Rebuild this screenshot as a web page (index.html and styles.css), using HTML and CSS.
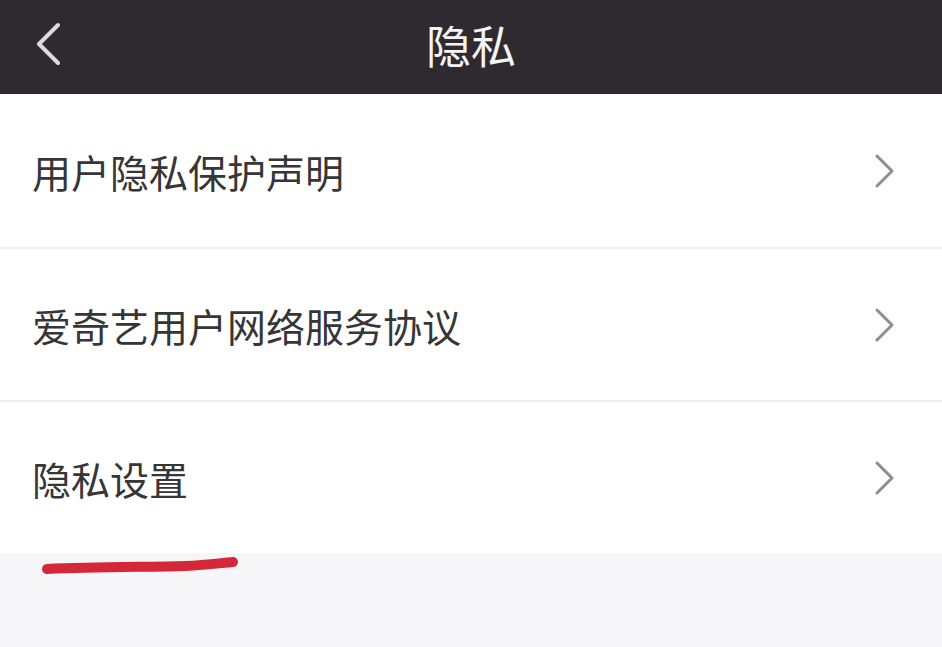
FILE: index.html
```html
<!DOCTYPE html>
<html lang="zh-CN">
<head>
<meta charset="utf-8">
<title>隐私</title>
<link rel="stylesheet" href="styles.css">
</head>
<body>
<div class="page">
  <header class="topbar">
    <div class="back">
      <svg width="24" height="44" viewBox="0 0 24 44"><path d="M21 3 L2 22 L21 41" fill="none" stroke="#dcdcdc" stroke-width="4" stroke-linecap="round" stroke-linejoin="round"/></svg>
    </div>
    <h1 class="title">隐私</h1>
    <div class="spacer"></div>
  </header>
  <ul class="list">
    <li class="row"><span class="label">用户隐私保护声明</span><svg class="chev" width="22" height="34" viewBox="0 0 22 34"><path d="M3 2 L18 17 L3 32" fill="none" stroke="#8e8e8e" stroke-width="3" stroke-linecap="round" stroke-linejoin="round"/></svg></li>
    <li class="row"><span class="label">爱奇艺用户网络服务协议</span><svg class="chev" width="22" height="34" viewBox="0 0 22 34"><path d="M3 2 L18 17 L3 32" fill="none" stroke="#8e8e8e" stroke-width="3" stroke-linecap="round" stroke-linejoin="round"/></svg></li>
    <li class="row"><span class="label">隐私设置</span><svg class="chev" width="22" height="34" viewBox="0 0 22 34"><path d="M3 2 L18 17 L3 32" fill="none" stroke="#8e8e8e" stroke-width="3" stroke-linecap="round" stroke-linejoin="round"/></svg></li>
  </ul>
  <svg class="mark" width="220" height="30" viewBox="0 0 220 30"><path d="M12 16 C 60 14, 115 14, 150 13 C 172 12, 186 10, 198 9" fill="none" stroke="#d4283a" stroke-width="10" stroke-linecap="round"/></svg>
</div>
</body>
</html>
```

FILE: styles.css
```css
html, body {
  margin: 0;
  padding: 0;
  background: #f6f5f8;
  font-family: "Noto Sans CJK SC", "Noto Sans", sans-serif;
}
.page {
  position: relative;
  width: 942px;
  height: 647px;
  overflow: hidden;
}
.topbar {
  height: 94px;
  background: #2f2a30;
  display: grid;
  grid-template-columns: 1fr auto 1fr;
  align-items: center;
}
.back {
  padding-left: 37px;
  display: flex;
  align-items: center;
  height: 94px;
  padding-bottom: 6px;
  box-sizing: border-box;
}
.title {
  margin: 0;
  color: #f4f4f4;
  font-size: 45px;
  font-weight: 400;
  line-height: 1;
  padding-bottom: 6px;
}
.list {
  list-style: none;
  margin: 0;
  padding: 0;
  background: #fff;
}
.row {
  height: 153px;
  display: flex;
  align-items: center;
  justify-content: space-between;
  padding: 0 46px 0 32px;
  box-sizing: border-box;
  border-top: 2px solid #efeeef;
}
.row:first-child {
  border-top: none;
}
.label {
  font-size: 39px;
  color: #363636;
  line-height: 1;
  padding-top: 1px;
}
.chev {
  margin-top: 0;
}
.mark {
  position: absolute;
  left: 35px;
  top: 553px;
}
```
